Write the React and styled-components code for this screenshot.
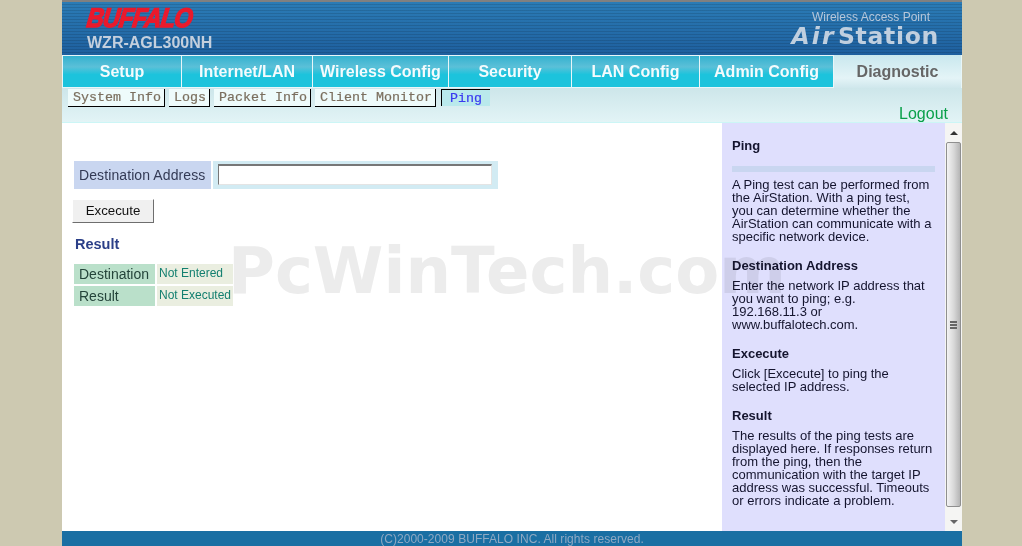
import React from 'react'
import styled, { createGlobalStyle } from 'styled-components'

const GlobalStyle = createGlobalStyle`
  html, body { margin: 0; padding: 0; height: 100%; background: #cdc9b1; overflow: hidden; }
  body { font-family: "Liberation Sans", Arial, sans-serif; }
  * { box-sizing: border-box; }
`

const Page = styled.div`
  position: relative;
  width: 900px;
  height: 546px;
  margin-left: 62px;
  display: flex;
  flex-direction: column;
  overflow: hidden;
`
const TopLine = styled.div`
  height: 2px;
  flex: none;
  background: #808080;
`
const Header = styled.header`
  flex: none;
  height: 53px;
  display: flex;
  justify-content: space-between;
  background:
    repeating-linear-gradient(to bottom, transparent 0 2px, rgba(0,0,0,.12) 2px 3px),
    linear-gradient(to bottom, #2b7cb6, #1e5f9e);
`
const Brand = styled.div`
  padding: 5px 0 0 25px;
  display: flex;
  flex-direction: column;
`
const BuffaloLogo = styled.div`
  height: 23px;
  font: italic 900 27px/23px "Liberation Sans", sans-serif;
  color: #ea1a2c;
  -webkit-text-stroke: 1.5px #ea1a2c;
  letter-spacing: -1px;
  transform-origin: left center;
  transform: scaleX(.87) skewX(-8deg);
`
const Model = styled.div`
  margin-top: 3px;
  font: bold 16px/20px "Liberation Sans", sans-serif;
  color: #c4cfdd;
`
const Product = styled.div`
  padding: 8px 23px 0 0;
  display: flex;
  flex-direction: column;
  align-items: flex-end;
  color: #b7c7da;
`
const ProductLabel = styled.div`
  font: 12px/14px "Liberation Sans", sans-serif;
  margin-right: 9px;
`
const AirStationLogo = styled.div`
  font: bold 23.5px/25px "DejaVu Sans", sans-serif;
  letter-spacing: .7px;
  color: #c0cfdf;
  & em { font-style: italic; letter-spacing: 2.2px; margin-right: 2px; }
`
const Tabs = styled.nav`
  flex: none;
  height: 33px;
  display: flex;
`
const Tab = styled.div`
  width: ${props => props.$w}px;
  flex: none;
  display: flex;
  align-items: center;
  justify-content: center;
  font: bold 16px "Liberation Sans", sans-serif;
  color: ${props => props.$active ? '#666666' : '#f4fbfd'};
  border: 1px solid #e8f6f9;
  border-left-width: ${props => props.$first ? 1 : 0}px;
  border-top-width: ${props => props.$active ? 0 : 1}px;
  border-bottom-width: ${props => props.$active ? 0 : 1}px;
  background: ${props => props.$active
    ? 'linear-gradient(to bottom, #c9e8ee, #e4f4f7 70%, #cfe7ec)'
    : 'linear-gradient(to bottom, #34b1cf, #5bc0d8 35%, #1cc3dc 60%, #1cc3dc)'};
`
const SubBar = styled.div`
  flex: none;
  height: 35px;
  padding: 1px 0 0 6px;
  display: flex;
  position: relative;
  background: linear-gradient(to bottom, #cde6ea, #e2f4f6);
  border-bottom: 1px solid #ccf6f6;
`
const SubTab = styled.div`
  height: ${props => props.$active ? 17 : 18}px;
  margin: 0 4px 0 ${props => props.$active ? 1 : 0}px;
  padding: 0 ${props => props.$active ? 8 : 3}px 0 ${props => props.$active ? 8 : 5}px;
  font: 13.33px/${props => props.$active ? 17 : 18}px "Liberation Mono", monospace;
  -webkit-text-stroke: .2px currentColor;
  white-space: nowrap;
  color: ${props => props.$active ? '#3a3af0' : '#7b6f5e'};
  background: ${props => props.$active ? '#b9e9ec' : '#eefbfb'};
  border-style: solid;
  border-color: #000;
  border-width: ${props => props.$active ? '1px 0 0 1px' : '0 1px 1px 0'};
`
const Logout = styled.a`
  position: absolute;
  right: 14px;
  bottom: -2px;
  font: 16px/20px "Liberation Sans", sans-serif;
  color: #0aa04a;
`
const Body = styled.div`
  flex: 1;
  min-height: 0;
  display: flex;
  background: #fff;
`
const Main = styled.main`
  flex: 1;
  padding: 38px 0 0 12px;
`
const AddressRow = styled.div`
  display: flex;
  gap: 2px;
  height: 28px;
  width: 424px;
`
const AddressLabel = styled.div`
  width: 137px;
  flex: none;
  display: flex;
  align-items: center;
  padding-left: 5px;
  font: 14px "Liberation Sans", sans-serif;
  letter-spacing: .1px;
  color: #333a55;
  background: #c9d6f0;
`
const AddressCell = styled.div`
  flex: 1;
  padding: 3px 6px 3px 5px;
  background: #d2ebf3;
`
const AddressInput = styled.input`
  display: block;
  width: 100%;
  height: 21px;
  padding: 0;
  background: #fff;
  border: 1px solid;
  border-width: 2px 1px 1px 1px;
  border-color: #777 #e4e4e4 #e4e4e4 #777;
`
const ExecuteButton = styled.button`
  display: block;
  width: 82px;
  height: 24px;
  margin: 10px 0 0 -2px;
  padding: 0 0 2px;
  font: 13.3px "Liberation Sans", sans-serif;
  color: #111;
  background: #f0f0f0;
  border: 1px solid;
  border-color: #fff #6e6e6e #6e6e6e #fff;
`
const ResultTitle = styled.h3`
  margin: 12px 0 0 1px;
  font: bold 14.5px/18px "Liberation Sans", sans-serif;
  color: #2b3f88;
`
const ResultTable = styled.div`
  margin-top: 11px;
  display: grid;
  grid-template-columns: 81px 76px;
  grid-auto-rows: 20px;
  gap: 2px;
`
const ResultKey = styled.div`
  padding-left: 5px;
  font: 14px/20px "Liberation Sans", sans-serif;
  color: #24443a;
  background: #bae0ca;
`
const ResultValue = styled.div`
  padding-left: 2px;
  font: 12px/19px "Liberation Sans", sans-serif;
  white-space: nowrap;
  color: #127f6f;
  background: #eaeee0;
`
const Side = styled.aside`
  width: 223px;
  flex: none;
  padding: 15px 10px 0;
  background: #dfdffd;
  font: 13px/13px "Liberation Sans", sans-serif;
  color: #14142e;
`
const SideTitle = styled.h4`
  margin: 0;
  font: bold 13px/16px "Liberation Sans", sans-serif;
  color: #14142e;
`
const SideRule = styled.div`
  height: 6px;
  margin-top: 12px;
  background: #c9d6f0;
`
const SideText = styled.p`
  margin: ${props => props.$top || 5}px 0 15px;
  white-space: pre-line;
`
const Scrollbar = styled.div`
  width: 17px;
  flex: none;
  display: flex;
  flex-direction: column;
  align-items: center;
  background: #f5f5f3;
`
const ScrollArrow = styled.div`
  flex: none;
  height: 19px;
  margin-top: ${props => props.$down ? 'auto' : '0'};
  display: flex;
  align-items: center;
  justify-content: center;
  &::before {
    content: '';
    border-left: 4px solid transparent;
    border-right: 4px solid transparent;
    ${props => props.$down ? 'border-top: 4px solid #666;' : 'border-bottom: 4px solid #333;'}
  }
`
const ScrollThumb = styled.div`
  flex: none;
  height: 365px;
  width: 15px;
  display: flex;
  align-items: center;
  justify-content: center;
  border: 1px solid #8f8f8f;
  border-radius: 2px;
  background: linear-gradient(to right, #f4f4f4, #d6d6d6 55%, #b5b5b5);
`
const ScrollGrip = styled.div`
  width: 7px;
  height: 8px;
  background: repeating-linear-gradient(to bottom, #666 0 2px, transparent 2px 3px);
`
const Footer = styled.footer`
  flex: none;
  height: 15px;
  text-align: center;
  font: 12px/16px "Liberation Sans", sans-serif;
  letter-spacing: .05px;
  color: #8fa9c3;
  background: #1a6fa3;
`
const Watermark = styled.div`
  position: absolute;
  left: 166px;
  top: 233px;
  font: bold 64px/76px "DejaVu Sans", sans-serif;
  white-space: nowrap;
  pointer-events: none;
  color: #ececec;
  mix-blend-mode: multiply;
`

const tabs = [
  { label: 'Setup', w: 120 },
  { label: 'Internet/LAN', w: 131 },
  { label: 'Wireless Config', w: 136 },
  { label: 'Security', w: 123 },
  { label: 'LAN Config', w: 128 },
  { label: 'Admin Config', w: 134 },
  { label: 'Diagnostic', w: 128, active: true },
]

const subTabs = ['System Info', 'Logs', 'Packet Info', 'Client Monitor']

const App = () => {
  return (
    <Page>
      <GlobalStyle />
      <TopLine />
      <Header>
        <Brand>
          <BuffaloLogo>BUFFALO</BuffaloLogo>
          <Model>WZR-AGL300NH</Model>
        </Brand>
        <Product>
          <ProductLabel>Wireless Access Point</ProductLabel>
          <AirStationLogo><em>Air</em>Station</AirStationLogo>
        </Product>
      </Header>
      <Tabs>
        {tabs.map((t, i) => (
          <Tab key={t.label} $w={t.w} $first={i === 0} $active={t.active}>{t.label}</Tab>
        ))}
      </Tabs>
      <SubBar>
        {subTabs.map(s => <SubTab key={s}>{s}</SubTab>)}
        <SubTab $active>Ping</SubTab>
        <Logout>Logout</Logout>
      </SubBar>
      <Body>
        <Main>
          <AddressRow>
            <AddressLabel>Destination Address</AddressLabel>
            <AddressCell><AddressInput /></AddressCell>
          </AddressRow>
          <ExecuteButton>Excecute</ExecuteButton>
          <ResultTitle>Result</ResultTitle>
          <ResultTable>
            <ResultKey>Destination</ResultKey>
            <ResultValue>Not Entered</ResultValue>
            <ResultKey>Result</ResultKey>
            <ResultValue>Not Executed</ResultValue>
          </ResultTable>
        </Main>
        <Side>
          <SideTitle>Ping</SideTitle>
          <SideRule />
          <SideText $top={6}>{'A Ping test can be performed from\nthe AirStation. With a ping test,\nyou can determine whether the\nAirStation can communicate with a\nspecific network device.'}</SideText>
          <SideTitle>Destination Address</SideTitle>
          <SideText>{'Enter the network IP address that\nyou want to ping; e.g.\n192.168.11.3 or\nwww.buffalotech.com.'}</SideText>
          <SideTitle>Excecute</SideTitle>
          <SideText>{'Click [Excecute] to ping the\nselected IP address.'}</SideText>
          <SideTitle>Result</SideTitle>
          <SideText>{'The results of the ping tests are\ndisplayed here. If responses return\nfrom the ping, then the\ncommunication with the target IP\naddress was successful. Timeouts\nor errors indicate a problem.'}</SideText>
        </Side>
        <Scrollbar>
          <ScrollArrow />
          <ScrollThumb><ScrollGrip /></ScrollThumb>
          <ScrollArrow $down />
        </Scrollbar>
      </Body>
      <Footer>(C)2000-2009 BUFFALO INC. All rights reserved.</Footer>
      <Watermark>PcWinTech.com</Watermark>
    </Page>
  )
}

export default App
